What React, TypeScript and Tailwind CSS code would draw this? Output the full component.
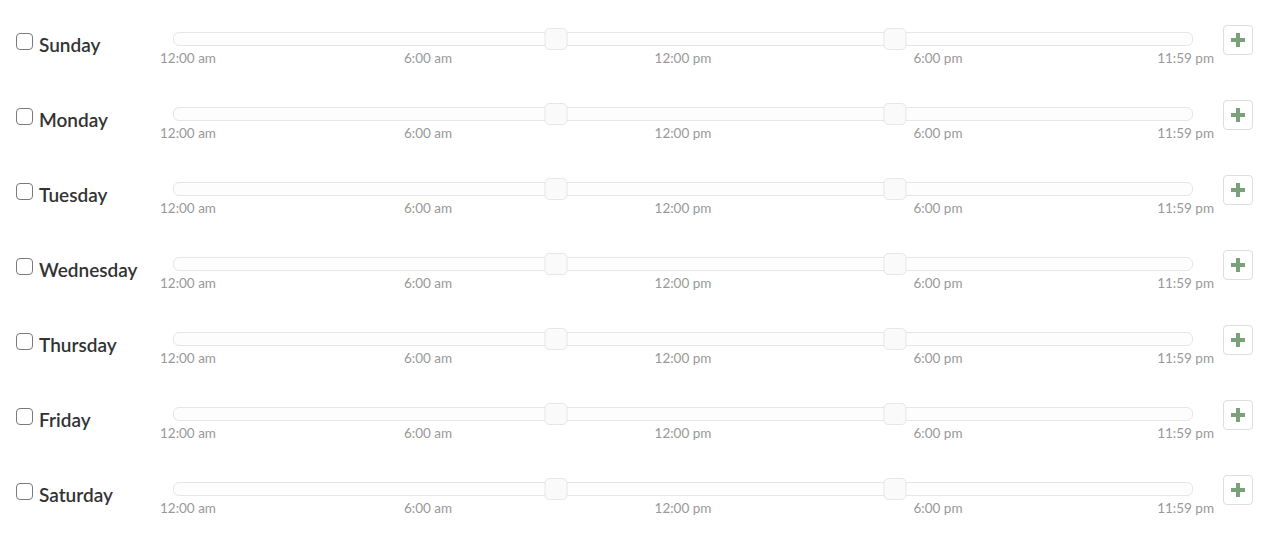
import React from 'react'

const days = ['Sunday', 'Monday', 'Tuesday', 'Wednesday', 'Thursday', 'Friday', 'Saturday']

// hour of the day -> percent of track
const pct = (h: number) => (h / 24) * 100

function PlusIcon() {
  return (
    <svg width="14" height="14" viewBox="0 0 14 14">
      <rect x="5" y="0" width="4" height="14" fill="#7ba17b" />
      <rect x="0" y="5" width="14" height="4" fill="#7ba17b" />
    </svg>
  )
}

function DayRow({ day }: { day: string }) {
  return (
    <div className="flex h-[75px]">
      <label className="flex w-[160px] shrink-0 items-start pl-4 pt-[33px]">
        <span className="block h-[17px] w-[17px] shrink-0 rounded-[4px] border border-[#7a7a7a] bg-white" />
        <span className="ml-[6px] mt-[0px] text-[19px] font-semibold leading-[24px] text-[#333]">{day}</span>
      </label>

      <div className="flex-1 pt-[32px]">
        <div className="relative ml-[13px] mr-[21px] h-[14px] rounded-[6px] border border-[#e6e6e6] bg-[#fdfdfd]">
          {[9, 17].map((h) => (
            <div
              key={h}
              className="absolute top-[-5px] h-[22px] w-[23px] -translate-x-1/2 rounded-[5px] border border-[#e6e6e6] bg-[#fafafa]"
              style={{ left: `${pct(h)}%` }}
            />
          ))}
        </div>
        <div className="relative ml-[13px] mr-[21px] mt-[3px] h-[18px] text-[13.5px] leading-[18px] text-[#999]">
          <span className="absolute left-[-13px] top-0 whitespace-nowrap">12:00 am</span>
          <span className="absolute left-1/4 top-0 -translate-x-1/2 whitespace-nowrap">6:00 am</span>
          <span className="absolute left-1/2 top-0 -translate-x-1/2 whitespace-nowrap">12:00 pm</span>
          <span className="absolute left-3/4 top-0 -translate-x-1/2 whitespace-nowrap">6:00 pm</span>
          <span className="absolute right-[-21px] top-0 whitespace-nowrap">11:59 pm</span>
        </div>
      </div>

      <div className="ml-[9px] mr-[23px] pt-[25px]">
        <button className="flex h-[30px] w-[30px] items-center justify-center rounded-[4px] border border-[#dedede] bg-white">
          <PlusIcon />
        </button>
      </div>
    </div>
  )
}

export default function App() {
  return (
    <div className="min-h-[548px] bg-white font-['Lato',sans-serif]">
      {days.map((d) => (
        <DayRow key={d} day={d} />
      ))}
    </div>
  )
}
